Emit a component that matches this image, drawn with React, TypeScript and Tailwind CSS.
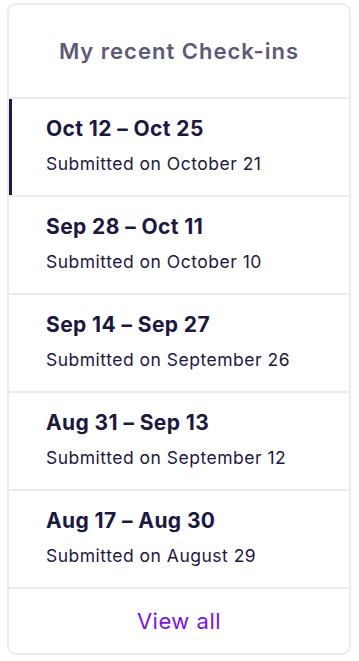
const checkIns = [
  { range: "Oct 12 – Oct 25", submitted: "October 21", active: true },
  { range: "Sep 28 – Oct 11", submitted: "October 10" },
  { range: "Sep 14 – Sep 27", submitted: "September 26" },
  { range: "Aug 31 – Sep 13", submitted: "September 12" },
  { range: "Aug 17 – Aug 30", submitted: "August 29" },
];

export default function App() {
  return (
    <div
      className="min-h-screen bg-white px-[7px] pt-[3px]"
      style={{ fontFamily: "Inter, 'Noto Sans', sans-serif" }}
    >
      <div className="w-[344px] rounded-[9px] border-2 border-[#ececec] bg-white overflow-hidden">
        <div className="h-[92px] flex items-center justify-center">
          <h2 className="text-[22px] font-semibold text-[#5d5a78] tracking-[1px]">
            My recent Check-ins
          </h2>
        </div>
        {checkIns.map((c) => (
          <div
            key={c.range}
            className="relative h-[98px] border-t-2 border-[#ececec] pl-[37px] pt-[18px]"
          >
            {c.active && (
              <span className="absolute left-0 top-0 bottom-0 w-[3px] bg-[#1f1a45]" />
            )}
            <div className="text-[21px] font-bold leading-[24px] text-[#1c1840] tracking-[0.4px]">
              {c.range}
            </div>
            <div className="mt-[13px] text-[17.5px] leading-[20px] text-[#1c1840] tracking-[0.5px]">
              Submitted on {c.submitted}
            </div>
          </div>
        ))}
        <div className="h-[66px] border-t-2 border-[#ececec] flex items-center justify-center">
          <a className="text-[22px] text-[#7a14e0] tracking-[0.5px]">View all</a>
        </div>
      </div>
    </div>
  );
}
